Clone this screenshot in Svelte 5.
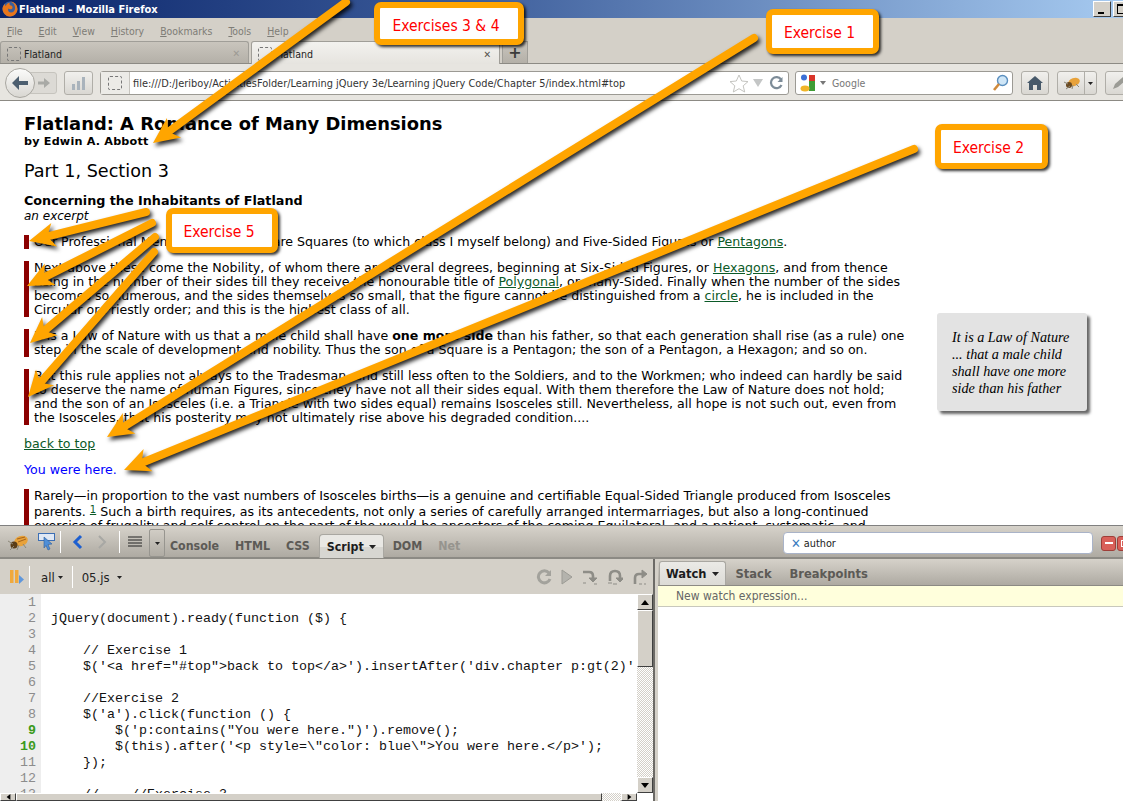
<script>
  const menus = ["File", "Edit", "View", "History", "Bookmarks", "Tools", "Help"]

  const codeLines = [
    "",
    "jQuery(document).ready(function ($) {",
    "",
    "    // Exercise 1",
    "    $('<a href=\"#top\">back to top</a>').insertAfter('div.chapter p:gt(2)'",
    "",
    "    //Exercise 2",
    "    $('a').click(function () {",
    "        $('p:contains(\"You were here.\")').remove();",
    "        $(this).after('<p style=\\\"color: blue\\\">You were here.</p>');",
    "    });",
    "",
    "    //    //Exercise 3"
  ]
  const breakable = [9, 10]

  // tail x,y then tip x,y
  const arrows = [
    [346, 2, 153, 143],
    [754, 38, 107, 437],
    [914, 149, 124, 470],
    [146, 212, 29, 241],
    [152, 223, 27, 286],
    [155, 237, 30, 343],
    [154, 252, 28, 397]
  ]

  function arrowHead(a) {
    const dx = a[0] - a[2], dy = a[1] - a[3]
    const len = Math.hypot(dx, dy)
    const ux = dx / len, uy = dy / len
    const px = -uy, py = ux
    const pt = (along, side) => (a[2] + ux * along + px * side).toFixed(1) + "," + (a[3] + uy * along + py * side).toFixed(1)
    return [pt(0, 0), pt(26, 12), pt(19, 0), pt(26, -12)].join(" ")
  }
  function neck(a) {
    const dx = a[0] - a[2], dy = a[1] - a[3]
    const len = Math.hypot(dx, dy)
    return { x: a[2] + dx / len * 18, y: a[3] + dy / len * 18 }
  }
</script>

<div class="screen">
  <div class="titlebar">
    <svg class="fox" width="16" height="16" viewBox="0 0 16 16">
      <circle cx="8" cy="8" r="7.5" fill="#3b5f9e"/>
      <path d="M8 .5a7.5 7.5 0 1 1-7.4 6.3C1 5 2 3.6 3 3c-.2 1 .2 1.6.8 2 .6-1.800 2-3 4.200-3.200C7 3 7.500 4 9 4.500c1.500.5 2 1.800 1.200 3-.9 1.200-3 1-3.800 0C5.500 9 6.500 11.500 9 11.500c2.800 0 4.500-2.500 4-5.500C12.500 3 10.500 1 8 .5z" fill="#e8761c"/>
    </svg>
    <span class="title-text">Flatland - Mozilla Firefox</span>
    <span class="win-btns">
      <span class="win-btn"><i class="min"></i></span>
      <span class="win-btn"><i class="max"></i></span>
    </span>
  </div>

  <div class="menubar">
    {#each menus as m}
      <span class="menu"><u>{m[0]}</u>{m.slice(1)}</span>
    {/each}
  </div>

  <div class="tabstrip">
    <div class="tab">
      <span class="favicon small"></span>
      <span class="tab-label">Flatland</span>
      <span class="tab-x">✕</span>
    </div>
    <div class="tab active">
      <span class="favicon small"></span>
      <span class="tab-label">Flatland</span>
      <span class="tab-x">✕</span>
    </div>
    <div class="newtab">+</div>
  </div>

  <div class="navbar">
    <div class="backfwd">
      <span class="fwd">
        <svg width="14" height="14" viewBox="0 0 14 14"><path d="M1 5.500h6V2l6 5-6 5V8.500H1z" fill="#a9aaa6"/></svg>
      </span>
      <span class="back">
        <svg width="18" height="16" viewBox="0 0 18 16"><path d="M17 6H8V1L1 8l7 7v-5h9z" fill="#4d5f70"/></svg>
      </span>
    </div>
    <div class="navbtn stats">
      <svg width="16" height="14" viewBox="0 0 16 14"><path d="M1 8h3v6H1zM6 5h3v9H6zM11 1h3v13h-3z" fill="#a9b3bc"/></svg>
    </div>
    <div class="urlbar">
      <span class="identity"><span class="favicon"></span></span>
      <span class="url">file:///D:/Jeriboy/ActivitiesFolder/Learning jQuery 3e/Learning jQuery Code/Chapter 5/index.html#top</span>
      <svg class="star" width="20" height="19" viewBox="0 0 20 19"><path d="M10 1l2.700 6 6.300.6-4.800 4.200 1.500 6.200L10 14.700 4.300 18l1.500-6.200L1 7.600 7.300 7z" fill="#fff" stroke="#c4c4c0"/></svg>
      <svg class="drop" width="10" height="8" viewBox="0 0 10 8"><path d="M0 0h10L5 8z" fill="#c4c6c6"/></svg>
      <svg class="reload" width="14" height="14" viewBox="0 0 14 14"><path d="M12 3.500A5.500 5.500 0 1 0 12.500 9" fill="none" stroke="#7d8c98" stroke-width="2.200"/><path d="M13.500 1v5h-5z" fill="#7d8c98"/></svg>
    </div>
    <div class="searchbar">
      <svg width="16" height="18" viewBox="0 0 16 18"><circle cx="4" cy="3.500" r="3" fill="#3b6fd6"/><path d="M9 1h6v9H9z" fill="#d9352a"/><path d="M9 7h6v10H9z" fill="#3f9c35"/><ellipse cx="5" cy="14.500" rx="4.500" ry="3" fill="#f0b428"/></svg>
      <svg width="6" height="4" viewBox="0 0 6 4" class="engine-drop"><path d="M0 0h6L3 4z" fill="#777"/></svg>
      <span class="google">Google</span>
      <svg width="17" height="18" viewBox="0 0 17 18" class="glass"><circle cx="10.500" cy="6.500" r="5" fill="#cfe6f7" stroke="#5b8fbf" stroke-width="1.400"/><path d="M7 10l-5 6" stroke="#d08a3c" stroke-width="2.600"/></svg>
    </div>
    <div class="navbtn home">
      <svg width="16" height="14" viewBox="0 0 16 14"><path d="M8 0l8 7h-2v7h-4V9H6v5H2V7H0z" fill="#47596a"/></svg>
    </div>
    <div class="navbtn bugbtn">
      <svg width="20" height="14" viewBox="0 0 20 14"><ellipse cx="11" cy="6" rx="6" ry="4" fill="#e8a23a" transform="rotate(-20 11 6)"/><circle cx="6" cy="9" r="3" fill="#6b4a20"/><path d="M3 13l4-3M9 13l1-4M16 11l-3-3M1 6l4 2" stroke="#8b8778"/></svg>
      <span class="bug-drop"><svg width="5" height="3" viewBox="0 0 5 3"><path d="M0 0h5L2.500 3z" fill="#222"/></svg></span>
    </div>
    <div class="navbtn pencil">
      <svg width="16" height="14" viewBox="0 0 16 14"><path d="M1 13l2-5 8-7 3 3-8 7z" fill="#9b9b95"/></svg>
    </div>
  </div>

  <div class="page">
    <article class="chapter">
      <h1>Flatland: A Romance of Many Dimensions</h1>
      <div class="author">by Edwin A. Abbott</div>
      <h2>Part 1, Section 3</h2>
      <h3>Concerning the Inhabitants of Flatland</h3>
      <div class="excerpt">an excerpt</div>
      <p class="bar">Our Professional Men and Gentlemen are Squares (to which class I myself belong) and Five-Sided Figures or <a href="#top">Pentagons</a>.</p>
      <p class="bar">Next above these come the Nobility, of whom there are several degrees, beginning at Six-Sided Figures, or <a href="#top">Hexagons</a>, and from thence rising in the number of their sides till they receive the honourable title of <a href="#top">Polygonal</a>, or many-Sided. Finally when the number of the sides becomes so numerous, and the sides themselves so small, that the figure cannot be distinguished from a <a href="#top">circle</a>, he is included in the Circular or Priestly order; and this is the highest class of all.</p>
      <p class="bar">It is a Law of Nature with us that a male child shall have <b>one more side</b> than his father, so that each generation shall rise (as a rule) one step in the scale of development and nobility. Thus the son of a Square is a Pentagon; the son of a Pentagon, a Hexagon; and so on.</p>
      <p class="bar">But this rule applies not always to the Tradesman, and still less often to the Soldiers, and to the Workmen; who indeed can hardly be said to deserve the name of human Figures, since they have not all their sides equal. With them therefore the Law of Nature does not hold; and the son of an Isosceles (i.e. a Triangle with two sides equal) remains Isosceles still. Nevertheless, all hope is not such out, even from the Isosceles, that his posterity may not ultimately rise above his degraded condition....</p>
      <a class="backtop" href="#top">back to top</a>
      <p class="here">You were here.</p>
      <p class="bar">Rarely—in proportion to the vast numbers of Isosceles births—is a genuine and certifiable Equal-Sided Triangle produced from Isosceles parents. <sup><a href="#top">1</a></sup> Such a birth requires, as its antecedents, not only a series of carefully arranged intermarriages, but also a long-continued exercise of frugality and self-control on the part of the would-be ancestors of the coming Equilateral, and a patient, systematic, and continuous development.</p>
    </article>
    <aside class="pull">It is a Law of Nature<br>... that a male child<br>shall have one more<br>side than his father</aside>
  </div>

  <div class="firebug">
    <div class="fb-top">
      <svg class="fb-logo" width="22" height="18" viewBox="0 0 22 18"><ellipse cx="13" cy="8" rx="7" ry="5" fill="#e8a23a" transform="rotate(-20 13 8)"/><path d="M9 6l8-2M10 9l8-3" stroke="#a5641c"/><circle cx="6" cy="12" r="3.500" fill="#5a3d18"/><path d="M2 17l4-4M9 17l2-5M18 15l-3-4M0 8l5 3" stroke="#8b8778"/></svg>
      <svg class="fb-inspect" width="17" height="18" viewBox="0 0 17 18"><rect x=".5" y=".5" width="16" height="7" fill="#dfe8f4" stroke="#3c6fb4"/><path d="M6 4l8 7-4 .5 2 4.500-2 1-2-4.500-2 2.500z" fill="#4f8fd8" stroke="#2b5e9e" stroke-width=".6"/></svg>
      <span class="sep"></span>
      <svg class="chev" width="12" height="16" viewBox="0 0 12 16"><path d="M9 2L3 8l6 6" fill="none" stroke="#1d5fd0" stroke-width="3"/></svg>
      <svg class="chev" width="12" height="16" viewBox="0 0 12 16"><path d="M3 2l6 6-6 6" fill="none" stroke="#a8a8a4" stroke-width="2"/></svg>
      <span class="sep"></span>
      <svg class="lines" width="14" height="12" viewBox="0 0 14 12"><path d="M0 1h14M0 4h14M0 7h14M0 10h14" stroke="#222"/></svg>
      <span class="list-drop"><svg width="5" height="3" viewBox="0 0 5 3"><path d="M0 0h5L2.500 3z" fill="#222"/></svg></span>
      <span class="fb-tab">Console</span>
      <span class="fb-tab">HTML</span>
      <span class="fb-tab">CSS</span>
      <span class="fb-tab selected">Script <svg width="7" height="4" viewBox="0 0 7 4"><path d="M0 0h7L3.500 4z" fill="#222"/></svg></span>
      <span class="fb-tab">DOM</span>
      <span class="fb-tab off">Net</span>
      <div class="fb-search"><span class="search-x">✕</span> author</div>
      <span class="fb-red"><i></i></span>
      <span class="fb-red"><i class="sq"></i></span>
    </div>
    <div class="fb-panes">
      <div class="left">
        <div class="script-bar">
          <svg width="14" height="16" viewBox="0 0 14 16"><path d="M0 1h3.500v13H0zM5 1h3.500v13H5z" fill="#f0a93c"/><path d="M9 6l5 4.500L9 15z" fill="#5f97dc"/></svg>
          <span class="sep"></span>
          <span class="pick">all <svg width="5" height="3" viewBox="0 0 5 3"><path d="M0 0h5L2.500 3z" fill="#222"/></svg></span>
          <span class="sep"></span>
          <span class="pick file">05.js <svg width="5" height="3" viewBox="0 0 5 3"><path d="M0 0h5L2.500 3z" fill="#222"/></svg></span>
          <span class="debug">
            <svg width="16" height="16" viewBox="0 0 16 16"><path d="M13 4a6 6 0 1 0 1 6" fill="none" stroke="#a3a29c" stroke-width="3"/><path d="M15 1v6H9z" fill="#a3a29c"/></svg>
            <svg width="12" height="16" viewBox="0 0 12 16"><path d="M1 1l10 7-10 7z" fill="#b4b3ad" stroke="#9c9b95"/></svg>
            <svg width="16" height="16" viewBox="0 0 16 16"><path d="M1 3h6q4 0 4 4v4" fill="none" stroke="#8e8d87" stroke-width="2.600"/><path d="M7 9h8l-4 4zM1 14h3M12 15h3" fill="#8e8d87" stroke="#8e8d87"/></svg>
            <svg width="16" height="16" viewBox="0 0 16 16"><path d="M3 12V7q0-5 5-5t5 5v3" fill="none" stroke="#8e8d87" stroke-width="2.600"/><path d="M9 9h8l-4 4zM1 14h4M6 15h4" fill="#8e8d87" stroke="#8e8d87"/></svg>
            <svg width="16" height="16" viewBox="0 0 16 16"><path d="M3 15V9q0-4 4-4h4" fill="none" stroke="#8e8d87" stroke-width="2.600"/><path d="M10 1l5 4-5 4zM7 15h3M12 15h2" fill="#8e8d87" stroke="#8e8d87"/></svg>
          </span>
        </div>
        <div class="editor">
          <div class="source">
            {#each codeLines as line, i}
              <div class="code-row">
                <span class="num" class:live={breakable.includes(i + 1)}>{i + 1}</span>
                <span class="code">{line}</span>
              </div>
            {/each}
          </div>
          <div class="vscroll">
            <span class="sb-btn"><svg width="8" height="5" viewBox="0 0 8 5"><path d="M0 5h8L4 0z"/></svg></span>
            <span class="sb-thumb"></span>
            <span class="sb-track"></span>
            <span class="sb-btn"><svg width="8" height="5" viewBox="0 0 8 5"><path d="M0 0h8L4 5z"/></svg></span>
          </div>
          <div class="hscroll">
            <span class="sb-btn h"><svg width="5" height="6" viewBox="0 0 5 8"><path d="M5 0v8L0 4z"/></svg></span>
            <span class="hthumb"></span>
            <span class="htrack"></span>
            <span class="sb-btn h"><svg width="5" height="6" viewBox="0 0 5 8"><path d="M0 0v8l5-4z"/></svg></span>
          </div>
        </div>
      </div>
      <div class="right">
        <div class="side-tabs">
          <span class="side-tab selected">Watch <svg width="7" height="4" viewBox="0 0 7 4"><path d="M0 0h7L3.500 4z" fill="#222"/></svg></span>
          <span class="side-tab">Stack</span>
          <span class="side-tab">Breakpoints</span>
        </div>
        <div class="watch">New watch expression...</div>
      </div>
    </div>
  </div>

  <svg class="arrows" width="1123" height="801">
    <g class="arrow-group">
      {#each arrows as a}
        <line x1={a[0]} y1={a[1]} x2={neck(a).x} y2={neck(a).y} stroke="#ffa500" stroke-width="8" stroke-linecap="round"/>
        <polygon points={arrowHead(a)} fill="#ffa500"/>
      {/each}
    </g>
  </svg>

  <div class="callout c34">Exercises 3 &amp; 4</div>
  <div class="callout c1">Exercise 1</div>
  <div class="callout c2">Exercise 2</div>
  <div class="callout c5">Exercise 5</div>
</div>

<style>
  :global(body) {
    margin: 0;
    background: #fff;
  }
  .screen {
    position: relative;
    width: 1123px;
    height: 801px;
    overflow: hidden;
    display: flex;
    flex-direction: column;
    font-family: "DejaVu Sans Condensed", "DejaVu Sans", sans-serif;
  }
  .titlebar {
    height: 18px;
    flex: none;
    display: flex;
    align-items: center;
    padding-left: 2px;
    background: linear-gradient(90deg, #0a246a 0%, #3a5a98 40%, #a6caf0 100%);
  }
  .fox {
    margin-right: 1px;
  }
  .title-text {
    color: #fff;
    font-weight: bold;
    font-size: 11px;
  }
  .win-btns {
    margin-left: auto;
    margin-right: -8px;
    display: flex;
    gap: 2px;
  }
  .win-btn {
    width: 16px;
    height: 14px;
    background: #d4d0c8;
    border: 1px solid;
    border-color: #fff #404040 #404040 #fff;
    position: relative;
    display: block;
  }
  .win-btn i {
    position: absolute;
    display: block;
  }
  .min {
    left: 4px;
    bottom: 2px;
    width: 6px;
    height: 2px;
    background: #000;
  }
  .max {
    left: 3px;
    top: 2px;
    width: 7px;
    height: 7px;
    border: 1px solid #000;
    border-top-width: 2px;
  }
  .menubar {
    height: 23px;
    flex: none;
    display: flex;
    align-items: center;
    background: #d4d0c8;
    padding: 2px 0 0 7px;
    box-sizing: border-box;
    gap: 16px;
  }
  .menu {
    color: #7e7c76;
    font-size: 10.400px;
  }
  .tabstrip {
    height: 23px;
    flex: none;
    display: flex;
    background: #d4d0c8;
    border-bottom: 1px solid #8c8a84;
    box-sizing: border-box;
  }
  .tab {
    width: 249px;
    box-sizing: border-box;
    display: flex;
    align-items: center;
    padding: 2px 8px 0 6px;
    margin-right: 2px;
    border: 1px solid #a09e98;
    border-bottom: 0;
    border-radius: 3px 3px 0 0;
    background: linear-gradient(#c9c5bd, #b4b0a8);
    font-size: 10.500px;
    color: #222;
  }
  .tab.active {
    background: linear-gradient(#f3f2ef, #e6e4df);
    height: 23px;
  }
  .tab-label {
    margin-left: 3px;
  }
  .tab-x {
    margin-left: auto;
    font-size: 10px;
    color: #9c9a94;
  }
  .active .tab-x {
    color: #55534f;
  }
  .newtab {
    width: 26px;
    background: linear-gradient(#c9c5bd, #b4b0a8);
    border: 1px solid #a09e98;
    border-bottom: 0;
    box-sizing: border-box;
    text-align: center;
    font: bold 16px/21px "DejaVu Sans", sans-serif;
    color: #3c3c3c;
  }
  .favicon {
    display: block;
    width: 12px;
    height: 12px;
    border: 1px dashed #777;
    border-radius: 2px;
    flex: none;
  }
  .navbar {
    height: 37px;
    flex: none;
    display: flex;
    align-items: center;
    box-sizing: border-box;
    background: #e7e5e0;
    border-bottom: 1px solid #8c8a84;
    padding: 2px 0 0 5px;
  }
  .backfwd {
    position: relative;
    width: 52px;
    height: 30px;
    display: flex;
    align-items: center;
    flex: none;
  }
  .back {
    position: absolute;
    left: 0;
    top: 0;
    width: 28px;
    height: 28px;
    border: 1px solid #a9a7a1;
    border-radius: 50%;
    background: linear-gradient(#fbfbfa, #d9d7d2);
    display: flex;
    align-items: center;
    justify-content: center;
  }
  .fwd {
    margin-left: 24px;
    width: 28px;
    height: 22px;
    box-sizing: border-box;
    border: 1px solid #c6c4be;
    border-radius: 0 3px 3px 0;
    background: #dcdad5;
    display: flex;
    align-items: center;
    justify-content: flex-end;
    padding-right: 5px;
  }
  .navbtn {
    height: 24px;
    box-sizing: border-box;
    border: 1px solid #b0aea8;
    border-radius: 3px;
    background: linear-gradient(#f1f0ed, #d9d7d2);
    display: flex;
    align-items: center;
    justify-content: center;
    flex: none;
  }
  .stats {
    width: 29px;
    margin-left: 7px;
  }
  .urlbar {
    width: 689px;
    height: 24px;
    margin-left: 7px;
    box-sizing: border-box;
    flex: none;
    display: flex;
    align-items: center;
    background: #fff;
    border: 1px solid #9c9a94;
    border-radius: 3px;
  }
  .identity {
    width: 29px;
    height: 100%;
    box-sizing: border-box;
    background: #ecebe7;
    border-right: 1px solid #c6c4be;
    display: flex;
    align-items: center;
    justify-content: center;
    flex: none;
  }
  .url {
    margin-left: 3px;
    font-size: 10.900px;
    color: #333;
    white-space: nowrap;
  }
  .star {
    margin-left: auto;
  }
  .drop {
    margin: 0 6px 0 4px;
  }
  .reload {
    margin-right: 5px;
  }
  .searchbar {
    width: 218px;
    height: 24px;
    margin-left: 6px;
    box-sizing: border-box;
    flex: none;
    display: flex;
    align-items: center;
    background: #fff;
    border: 1px solid #9c9a94;
    border-radius: 3px;
    padding: 0 3px 0 4px;
  }
  .engine-drop {
    margin-left: 4px;
  }
  .google {
    margin-left: 6px;
    font-size: 10.500px;
    color: #777;
  }
  .glass {
    margin-left: auto;
  }
  .home {
    width: 28px;
    margin-left: 8px;
  }
  .bugbtn {
    width: 40px;
    margin-left: 8px;
    justify-content: flex-start;
    padding-left: 5px;
  }
  .bug-drop {
    margin-left: auto;
    width: 11px;
    height: 100%;
    border-left: 1px solid #b0aea8;
    display: flex;
    align-items: center;
    justify-content: center;
  }
  .pencil {
    width: 30px;
    margin-left: 8px;
  }
  .page {
    height: 424px;
    flex: none;
    overflow: hidden;
    display: flex;
    background: #fff;
    font-family: "DejaVu Sans", Verdana, sans-serif;
    font-size: 12.600px;
    line-height: 14px;
    color: #000;
  }
  .chapter {
    width: 887px;
    flex: none;
    margin-left: 24px;
    padding-top: 13px;
  }
  h1 {
    margin: 0;
    font-size: 17.900px;
    line-height: 20px;
  }
  .author {
    font-weight: bold;
    font-size: 11.200px;
    line-height: 15px;
    letter-spacing: .2px;
  }
  h2 {
    margin: 10px 0 0;
    font-weight: normal;
    font-size: 17.600px;
    line-height: 24px;
  }
  h3 {
    margin: 10px 0 0;
    font-size: 12.750px;
    line-height: 15px;
  }
  .excerpt {
    font-style: italic;
    font-size: 12px;
    line-height: 14px;
    margin: 1px 0 12px;
  }
  p {
    margin: 0 0 12px;
  }
  .bar {
    border-left: 5px solid #8b0000;
    padding-left: 5px;
  }
  a {
    color: #0b5a28;
  }
  .backtop {
    display: block;
    margin-top: 12px;
    line-height: 14px;
  }
  .here {
    color: #00f;
    margin-top: 12px;
    margin-bottom: 12px;
  }
  sup {
    font-size: 10px;
    line-height: 14px;
    vertical-align: 3px;
  }
  .pull {
    flex: none;
    align-self: flex-start;
    margin: 212px 0 0 26px;
    width: 150px;
    height: 98px;
    box-sizing: border-box;
    padding: 16px 0 0 15px;
    background: #e3e3e3;
    border-radius: 3px;
    box-shadow: 3px 3px 3px #666;
    font: italic 14.200px/17px "Liberation Serif", serif;
  }
  .firebug {
    flex: 1;
    display: flex;
    flex-direction: column;
    min-height: 0;
    border-top: 1px solid #808080;
    background: #d4d0c8;
    font-family: "DejaVu Sans Condensed", "DejaVu Sans", sans-serif;
  }
  .fb-top {
    height: 33px;
    flex: none;
    box-sizing: border-box;
    display: flex;
    align-items: center;
    padding-left: 8px;
    border-bottom: 2px solid #8c8a84;
    background: linear-gradient(#d6d2ca, #aeaaa2);
  }
  .fb-inspect {
    margin-left: 8px;
  }
  .sep {
    width: 1px;
    height: 22px;
    background: #fff;
    margin: 0 5px;
    flex: none;
  }
  .chev {
    margin: 0 6px;
  }
  .lines {
    margin: 0 7px 0 3px;
  }
  .list-drop {
    width: 16px;
    height: 28px;
    box-sizing: border-box;
    border: 1px solid #97958f;
    border-radius: 2px;
    display: flex;
    align-items: center;
    justify-content: center;
    margin-right: -3px;
    align-self: flex-end;
  }
  .fb-tab {
    font-size: 12.300px;
    font-weight: bold;
    color: #5c5a56;
    padding: 0 8px;
    align-self: stretch;
    display: flex;
    align-items: center;
    gap: 5px;
    margin-top: 8px;
  }
  .fb-tab.selected {
    height: 24px;
    box-sizing: border-box;
    padding: 0 7px;
    margin-left: 1px;
    margin-right: 1px;
    color: #1c1c1c;
    border: 1px solid #a9a7a1;
    border-bottom: 0;
    border-radius: 4px 4px 0 0;
    background: linear-gradient(#e9e8e4 50%, #d7d6d1 50%);
  }
  .fb-tab.off {
    color: #96948e;
  }
  .fb-search {
    margin-left: auto;
    margin-top: 3px;
    width: 310px;
    flex: none;
    height: 22px;
    box-sizing: border-box;
    background: #fff;
    border: 1px solid #a9b3c8;
    border-radius: 4px;
    display: flex;
    align-items: center;
    padding-left: 7px;
    gap: 3px;
    font-size: 10.800px;
    margin-right: 8px;
    color: #222;
  }
  .search-x {
    color: #3a7cc0;
    font-weight: bold;
    font-size: 13px;
  }
  .fb-red {
    width: 15px;
    height: 15px;
    box-sizing: border-box;
    border: 1px solid #9e3e38;
    border-radius: 3px;
    background: #d96059;
    display: flex;
    align-items: center;
    justify-content: center;
    flex: none;
    margin-right: 1px;
    margin-top: 3px;
  }
  .fb-red:last-child {
    margin-right: -9px;
  }
  .fb-red i {
    display: block;
    width: 8px;
    height: 2px;
    background: #fff;
  }
  .fb-red i.sq {
    height: 7px;
    background: none;
    border: 1px solid #fff;
    box-sizing: border-box;
  }
  .fb-panes {
    flex: 1;
    min-height: 0;
    display: flex;
  }
  .left {
    width: 653px;
    flex: none;
    display: flex;
    flex-direction: column;
    border-right: 2px solid #6c6a66;
    margin-right: 3px;
  }
  .script-bar {
    height: 35px;
    flex: none;
    box-sizing: border-box;
    display: flex;
    align-items: center;
    padding: 1px 0 0 10px;
    font-size: 13px;
    color: #222;
  }
  .pick {
    padding: 0 4px 0 6px;
    display: flex;
    align-items: center;
    gap: 3px;
  }
  .pick.file {
    gap: 7px;
    padding-left: 4px;
  }
  .debug {
    margin-left: auto;
    margin-right: 5px;
    display: flex;
    gap: 9px;
    align-items: center;
  }
  .editor {
    flex: 1;
    min-height: 0;
    position: relative;
    display: grid;
    grid-template-columns: 1fr 16px;
    grid-template-rows: 1fr 8px;
    background: #fff;
  }
  .source {
    overflow: hidden;
    background: linear-gradient(90deg, #eee 41px, #fff 41px);
    padding-top: 1px;
  }
  .code-row {
    display: flex;
    height: 16px;
    line-height: 16px;
    white-space: pre;
    font-family: "Liberation Mono", "Courier New", monospace;
    font-size: 13.330px;
  }
  .num {
    width: 36px;
    flex: none;
    text-align: right;
    color: #8c8c8c;
    font-family: "Liberation Mono", monospace;
    font-size: 13.330px;
  }
  .num.live {
    color: #3b9a1c;
    font-weight: bold;
  }
  .code {
    margin-left: 15px;
    color: #111;
  }
  .vscroll {
    display: flex;
    flex-direction: column;
    background: #d4d0c8;
  }
  .sb-btn {
    width: 16px;
    height: 16px;
    flex: none;
    box-sizing: border-box;
    background: #d4d0c8;
    border: 1px solid;
    border-color: #fff #404040 #404040 #fff;
    display: flex;
    align-items: center;
    justify-content: center;
  }
  .sb-btn.h {
    height: 8px;
  }
  .sb-thumb {
    height: 57px;
    flex: none;
    box-sizing: border-box;
    background: #d4d0c8;
    border: 1px solid;
    border-color: #fff #404040 #404040 #fff;
  }
  .sb-track {
    flex: 1;
    background: repeating-conic-gradient(#d4d0c8 0 25%, #fff 0 50%) 0 0 / 2px 2px;
  }
  .hscroll {
    grid-column: 1;
    display: flex;
    background: #d4d0c8;
    overflow: hidden;
  }
  .hthumb {
    width: 586px;
    box-sizing: border-box;
    border: 1px solid;
    border-color: #fff #404040 #404040 #fff;
    flex: none;
  }
  .htrack {
    flex: 1;
    background: repeating-conic-gradient(#d4d0c8 0 25%, #fff 0 50%) 0 0 / 2px 2px;
  }
  .right {
    flex: 1;
    min-width: 0;
    display: flex;
    flex-direction: column;
    background: #fff;
  }
  .side-tabs {
    height: 27px;
    flex: none;
    box-sizing: border-box;
    display: flex;
    align-items: flex-end;
    padding-left: 1px;
    gap: 2px;
    border-bottom: 1px solid #8c8a84;
    background: linear-gradient(#d6d2ca, #aeaaa2);
  }
  .side-tab {
    font-size: 12.800px;
    font-weight: bold;
    color: #5c5a56;
    height: 24px;
    display: flex;
    align-items: center;
    gap: 5px;
    padding: 0 8px;
  }
  .side-tab.selected {
    color: #1c1c1c;
    padding: 0 6px;
    border: 1px solid #a9a7a1;
    border-bottom: 0;
    border-radius: 3px 3px 0 0;
    background: linear-gradient(#ebeae6, #dcdbd6);
    box-sizing: border-box;
  }
  .watch {
    height: 21px;
    flex: none;
    box-sizing: border-box;
    line-height: 20px;
    padding-left: 18px;
    font-size: 12px;
    color: #666;
    background: #ffffdc;
    border-bottom: 1px solid #c8c8bc;
  }
  .arrows {
    position: absolute;
    left: 0;
    top: 0;
    pointer-events: none;
  }
  .arrow-group {
    filter: drop-shadow(2px 3px 2px rgba(0, 0, 0, .85));
  }
  .callout {
    position: absolute;
    box-sizing: border-box;
    height: 45px;
    padding-right: 6px;
    background: #fff;
    border: 6px solid #ffa500;
    border-radius: 7px;
    box-shadow: 2px 2px 3px rgba(0, 0, 0, .8);
    color: #f00;
    font-size: 15.500px;
    line-height: 36px;
    text-align: center;
    white-space: nowrap;
  }
  .c34 {
    left: 374px;
    top: 2px;
    width: 150px;
    height: 43px;
  }
  .c1 {
    left: 766px;
    top: 9px;
    width: 113px;
  }
  .c2 {
    left: 935px;
    top: 124px;
    width: 113px;
  }
  .c5 {
    left: 166px;
    top: 208px;
    width: 112px;
  }
</style>
